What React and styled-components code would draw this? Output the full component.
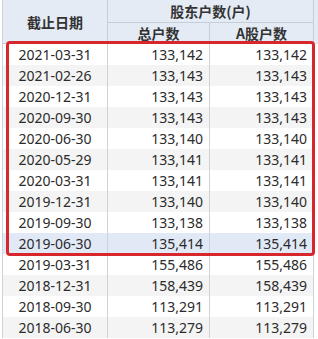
import React from "react";
import styled, { createGlobalStyle } from "styled-components";

const Global = createGlobalStyle`
  html, body { margin: 0; padding: 0; background: #ffffff; }
  body { font-family: "Noto Sans", "Noto Sans CJK SC", sans-serif; }
`;

const Page = styled.div`
  width: 318px;
  height: 339px;
  overflow: hidden;
  padding-left: 2px;
  box-sizing: border-box;
`;

const Table = styled.div`
  position: relative;
  display: grid;
  grid-template-columns: 105px 102px 104px 1fr;
  border-left: 1px solid #cdd3da;
`;

const HeadCell = styled.div`
  background: #e4ebf4;
  color: #333;
  font-family: "Noto Sans CJK SC", "Noto Sans", sans-serif;
  font-weight: 700;
  font-size: 14px;
  display: flex;
  align-items: center;
  justify-content: center;
  border-right: 1px solid #c6ced8;
  border-bottom: 1px solid #c6ced8;
  box-sizing: border-box;
  height: ${(p) => p.$h}px;
  grid-row: ${(p) => p.$row || "auto"};
  grid-column: ${(p) => p.$col || "auto"};
  line-height: 1;
`;

const Filler = styled.div`
  background: #e4ebf4;
  grid-row: 1 / span 2;
  grid-column: 4;
`;

const Cell = styled.div`
  height: 21px;
  font-size: 14px;
  color: #2b2b2b;
  display: flex;
  align-items: center;
  justify-content: ${(p) => (p.$num ? "flex-end" : "center")};
  padding-right: ${(p) => (p.$num ? "6px" : "0")};
  background: ${(p) => (p.$hl ? "#e2e9f6" : p.$alt ? "#f4f4f4" : "#ffffff")};
  border-right: 1px solid #cdd3da;
  box-sizing: border-box;
  line-height: 1;
`;

const Blank = styled.div`
  height: 21px;
  background: #ffffff;
`;

const RedBox = styled.div`
  position: absolute;
  left: 3px;
  top: 41px;
  width: 309px;
  height: 215px;
  border: 3px solid #d7262c;
  border-radius: 4px;
  box-sizing: border-box;
  pointer-events: none;
`;

const rows = [
  ["2021-03-31", "133,142", "133,142"],
  ["2021-02-26", "133,143", "133,143"],
  ["2020-12-31", "133,143", "133,143"],
  ["2020-09-30", "133,143", "133,143"],
  ["2020-06-30", "133,140", "133,140"],
  ["2020-05-29", "133,141", "133,141"],
  ["2020-03-31", "133,141", "133,141"],
  ["2019-12-31", "133,140", "133,140"],
  ["2019-09-30", "133,138", "133,138"],
  ["2019-06-30", "135,414", "135,414"],
  ["2019-03-31", "155,486", "155,486"],
  ["2018-12-31", "158,439", "158,439"],
  ["2018-09-30", "113,291", "113,291"],
  ["2018-06-30", "113,279", "113,279"],
];

export default function App() {
  return (
    <Page>
      <Global />
      <Table>
        <HeadCell $h={44} $row="1 / span 2" $col="1">截止日期</HeadCell>
        <HeadCell $h={23} $row="1" $col="2 / span 2">股东户数(户)</HeadCell>
        <Filler />
        <HeadCell $h={21} $row="2" $col="2">总户数</HeadCell>
        <HeadCell $h={21} $row="2" $col="3">A股户数</HeadCell>
        {rows.map((r, i) => {
          const alt = i % 2 === 1;
          const hl = i === 9;
          return (
            <React.Fragment key={r[0]}>
              <Cell $alt={alt} $hl={hl}>{r[0]}</Cell>
              <Cell $alt={alt} $hl={hl} $num>{r[1]}</Cell>
              <Cell $alt={alt} $hl={hl} $num>{r[2]}</Cell>
              <Blank />
            </React.Fragment>
          );
        })}
        <RedBox />
      </Table>
    </Page>
  );
}
